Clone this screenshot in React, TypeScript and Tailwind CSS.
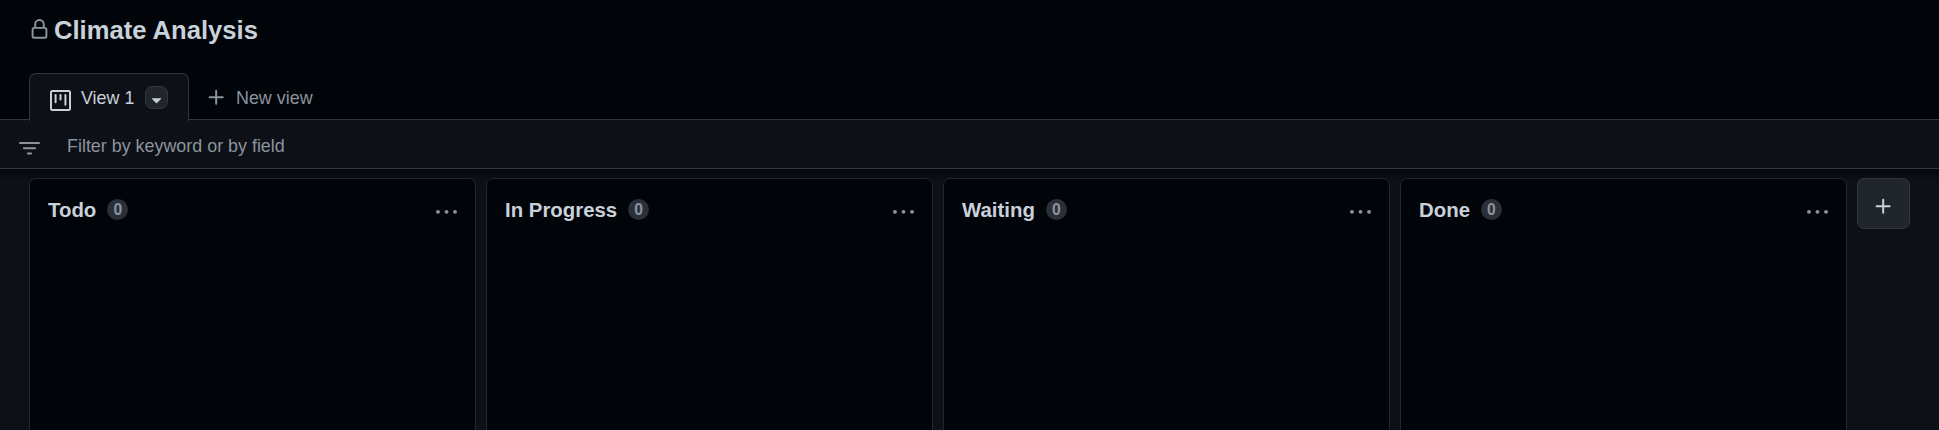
import React from "react";

const paths = {
  lock: "M4 4a4 4 0 0 1 8 0v2h.25c.966 0 1.75.784 1.75 1.75v5.5A1.75 1.75 0 0 1 12.25 15h-8.5A1.75 1.75 0 0 1 2 13.25v-5.5C2 6.784 2.784 6 3.75 6H4Zm8.25 3.5h-8.5a.25.25 0 0 0-.25.25v5.5c0 .138.112.25.25.25h8.5a.25.25 0 0 0 .25-.25v-5.5a.25.25 0 0 0-.25-.25ZM10.5 6V4a2.5 2.5 0 1 0-5 0v2Z",
  project:
    "M1.75 0h12.5C15.216 0 16 .784 16 1.75v12.5A1.75 1.75 0 0 1 14.25 16H1.75A1.75 1.75 0 0 1 0 14.25V1.75C0 .784.784 0 1.75 0ZM1.5 1.75v12.5c0 .138.112.25.25.25h12.5a.25.25 0 0 0 .25-.25V1.75a.25.25 0 0 0-.25-.25H1.75a.25.25 0 0 0-.25.25ZM11.75 3a.75.75 0 0 1 .75.75v7.5a.75.75 0 0 1-1.5 0v-7.5a.75.75 0 0 1 .75-.75Zm-8.25.75a.75.75 0 0 1 1.5 0v5.5a.75.75 0 0 1-1.5 0ZM8 3a.75.75 0 0 1 .75.75v3.5a.75.75 0 0 1-1.5 0v-3.5A.75.75 0 0 1 8 3Z",
  plus: "M7.75 2a.75.75 0 0 1 .75.75V7h4.25a.75.75 0 0 1 0 1.5H8.5v4.25a.75.75 0 0 1-1.5 0V8.5H2.75a.75.75 0 0 1 0-1.5H7V2.75A.75.75 0 0 1 7.75 2Z",
  filter:
    "M.75 3h14.5a.75.75 0 0 1 0 1.5H.75a.75.75 0 0 1 0-1.5ZM3 7.75A.75.75 0 0 1 3.75 7h8.5a.75.75 0 0 1 0 1.5h-8.5A.75.75 0 0 1 3 7.75Zm3 4a.75.75 0 0 1 .75-.75h2.5a.75.75 0 0 1 0 1.5h-2.5a.75.75 0 0 1-.75-.75Z",
  kebab:
    "M8 9a1.5 1.5 0 1 0 0-3 1.5 1.5 0 0 0 0 3ZM1.5 9a1.5 1.5 0 1 0 0-3 1.5 1.5 0 0 0 0 3Zm13 0a1.5 1.5 0 1 0 0-3 1.5 1.5 0 0 0 0 3Z",
  triangleDown:
    "m4.427 7.427 3.396 3.396a.25.25 0 0 0 .354 0l3.396-3.396A.25.25 0 0 0 11.396 7H4.604a.25.25 0 0 0-.177.427Z",
};

function Icon({ name, className = "" }: { name: keyof typeof paths; className?: string }) {
  return (
    <svg viewBox="0 0 16 16" fill="currentColor" aria-hidden="true" className={`h-[21px] w-[21px] shrink-0 ${className}`}>
      <path d={paths[name]} />
    </svg>
  );
}

const columns = [
  { title: "Todo", count: 0 },
  { title: "In Progress", count: 0 },
  { title: "Waiting", count: 0 },
  { title: "Done", count: 0 },
];

function Column({ title, count }: { title: string; count: number }) {
  return (
    <section className="h-[300px] w-[447px] shrink-0 rounded-t-[7px] border border-[#21262d] bg-[#010409]">
      <header className="flex items-center pt-[17px] pr-[18px] pl-[18px]">
        <h2 className="text-[20.4px] leading-[28px] font-bold text-[#c9d1d9]">{title}</h2>
        <span className="-mt-px ml-[11px] flex h-[21px] w-[21px] items-center justify-center rounded-full bg-[#2b2f38] text-[15.7px] leading-[21px] font-bold text-[#8b949e]">
          {count}
        </span>
        <button className="mt-[4px] ml-auto text-[#8b949e]">
          <Icon name="kebab" />
        </button>
      </header>
    </section>
  );
}

export default function App() {
  return (
    <div className="flex h-[430px] w-[1939px] flex-col overflow-hidden bg-[#010409] font-['Liberation_Sans',Arial,sans-serif] text-[17.9px] text-[#c9d1d9]">
      <header className="flex h-[73px] shrink-0 items-start pt-[10px] pl-[29px]">
        <Icon name="lock" className="mt-[9px] text-[#8b949e]" />
        <h1 className="ml-[4px] text-[25.6px] leading-[40px] font-bold">Climate Analysis</h1>
      </header>
      <nav className="flex h-[47px] shrink-0">
        <div className="w-[29px] border-b border-[#30363d]" />
        <div className="relative -mb-px flex w-[160px] items-center rounded-t-[7px] border border-b-0 border-[#30363d] bg-[#0d1117] pb-px pl-[20px]">
          <Icon name="project" className="mt-[7px]" />
          <span className="mt-[1px] ml-[10px] leading-[24px]">View 1</span>
          <button className="mr-[20px] ml-auto flex h-[23px] w-[23px] items-center justify-center rounded-[7px] border border-[#30363d] bg-[#21262d]">
            <Icon name="triangleDown" className="mt-[4px]" />
          </button>
        </div>
        <div className="flex flex-1 items-center border-b border-[#30363d] pl-[17px] text-[#8b949e]">
          <Icon name="plus" className="mt-[2px]" />
          <span className="mt-[3px] ml-[9px] leading-[24px]">New view</span>
        </div>
      </nav>
      <div className="flex h-[49px] shrink-0 items-center border-b border-[#30363d] bg-[#0d1117] pl-[19px] text-[#8b949e]">
        <Icon name="filter" className="mt-[9px]" />
        <span className="mt-[4px] ml-[27px] leading-[24px]">Filter by keyword or by field</span>
      </div>
      <main className="flex flex-1 gap-[10px] bg-[#0d1117] bg-[linear-gradient(to_bottom,#04070c_0px,#0d1117_12px)] pt-[9px] pl-[29px]">
        {columns.map((column) => (
          <Column key={column.title} {...column} />
        ))}
        <button className="flex h-[51px] w-[53px] items-center justify-center rounded-[7px] border border-[#30363d] bg-[#21262d]">
          <Icon name="plus" className="mt-[5px] mr-[1px]" />
        </button>
      </main>
    </div>
  );
}
